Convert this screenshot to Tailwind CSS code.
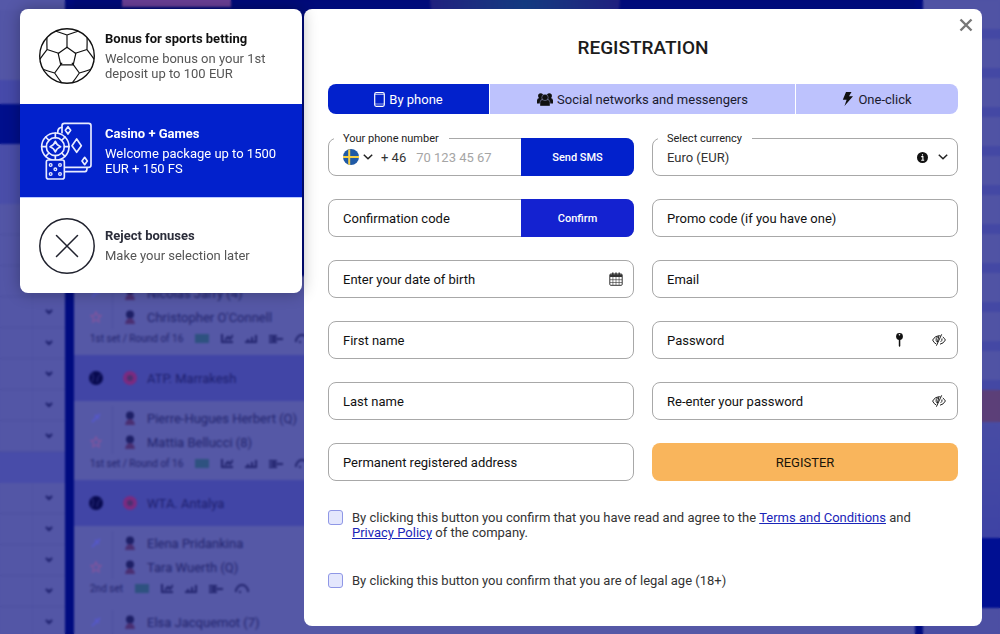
<!DOCTYPE html>
<html lang="en">
<head>
    <meta charset="UTF-8">
    <meta name="viewport" content="width=device-width, initial-scale=1.0">
    <title>Registration</title>
    <script src="https://cdn.jsdelivr.net/npm/@tailwindcss/browser@4"></script>
</head>
<body class="relative min-h-screen overflow-hidden bg-[#000b80] font-['Roboto',sans-serif] text-[13px] leading-[15px] text-[#222]">

    <!-- Sportsbook page behind the dialog -->
    <div class="absolute inset-0 flex overflow-hidden" aria-hidden="true">
        <!-- Sports menu -->
        <div class="w-[65px] shrink-0 bg-[#5356a6]">
            <div class="h-20 border-t-[10px] border-[#5558a8]"></div>
            <div class="h-6 bg-[#464aaa]"></div>
            <div class="h-10 bg-[#000f8c]"></div>
            <div class="h-[60px] bg-[#4a4ea9]"></div>
            <div id="sports-menu"></div>
        </div>

        <!-- Live matches -->
        <div class="ml-[9px] mr-2 flex min-w-0 flex-1 flex-col bg-[#4f52a0]">
            <div class="flex h-[276px] shrink-0 justify-between bg-[#000b7a]">
                <div class="ml-12 h-[7px] w-[109px] bg-[#6a3f96]"></div>
                <div class="mr-[295px] h-10 w-[190px] rounded-b-full bg-linear-to-r from-[#20207f] via-[#123a80] to-[#20207f]"></div>
            </div>
            <div id="matches"></div>
        </div>

        <!-- Bet slip -->
        <div class="w-[77px] shrink-0 bg-[#4c4fa3]">
            <div id="betslip"></div>
            <div class="h-8 bg-[#5c3f78]"></div>
            <div class="h-[116px] bg-linear-to-b from-[#484ca4] to-[#3e43a4]"></div>
            <div class="h-[70px] bg-[#000f92]"></div>
        </div>
    </div>
    <div class="absolute inset-0 backdrop-blur-[1px]"></div>

    <!-- Dialog -->
    <main class="relative flex items-start gap-[2px] pb-2 pl-5 pr-[18px] pt-[9px]">

        <!-- Bonus choice -->
        <aside class="z-10 w-[282px] shrink-0 overflow-hidden rounded-lg bg-white shadow-[0_0_16px_rgba(0,0,0,0.3)]">
            <button type="button" class="flex h-[95px] w-full items-center gap-[10px] px-[19px] pb-[2px] text-left">
                <svg class="size-14 shrink-0" viewBox="-28 -28 56 56" fill="none" stroke="#111" stroke-width="1.2" stroke-linejoin="round" stroke-linecap="round">
                    <circle r="27.3" stroke-width="1.4"/>
                    <path d="M0-8.8 8.8-2.4 6.2 8.8H-6.2L-8.8-2.4Z"/>
                    <g id="ball-seam"><path d="M0-8.8V-21M-11-24.7Q-6-23.2 0-21Q6-23.2 11-24.7"/></g>
                    <use href="#ball-seam" transform="rotate(72)"/>
                    <use href="#ball-seam" transform="rotate(144)"/>
                    <use href="#ball-seam" transform="rotate(216)"/>
                    <use href="#ball-seam" transform="rotate(288)"/>
                </svg>
                <span class="flex flex-col gap-[5px]">
                    <span class="font-bold text-[#111]">Bonus for sports betting</span>
                    <span class="text-[#555]">Welcome bonus on your 1st deposit up to 100 EUR</span>
                </span>
            </button>
            <button type="button" class="flex h-[94px] w-full items-center gap-[10px] border-b border-[#b9c9ff] bg-[#0221cc] px-[19px] text-left text-white">
                <svg class="h-[60px] w-14 shrink-0" viewBox="117 363 168 180" fill="none" stroke="#e8ebff" stroke-width="5" stroke-linejoin="round" stroke-linecap="round">
                    <path d="M186 398V377q0-7 7-7h73q7 0 7 7v118q0 7-7 7h-70"/>
                    <path d="M186 382q-13 0-13 16M197 515h58q6 0 6-11"/>
                    <path d="M204 380 212 391 204 402 196 391ZM230 417 244 437 230 457 216 437ZM254 472 262 483 254 494 246 483Z"/>
                    <circle cx="166" cy="440" r="41"/>
                    <circle cx="166" cy="440" r="27"/>
                    <path d="M166 424Q170 436 182 440Q170 444 166 456Q162 444 150 440Q162 436 166 424ZM166 399v14M166 467v14M125 440h14M193 440h14M137 411l10 10M195 411l-10 10M137 469l10-10M195 469l-10-10"/>
                    <rect x="139" y="480" width="54" height="57" rx="6" fill="#0221cc"/>
                    <g stroke-width="4">
                        <circle cx="152" cy="495" r="4"/><circle cx="180" cy="495" r="4"/><circle cx="166" cy="508" r="4"/><circle cx="152" cy="522" r="4"/><circle cx="180" cy="522" r="4"/>
                    </g>
                </svg>
                <span class="flex flex-col gap-[5px]">
                    <span class="font-bold">Casino + Games</span>
                    <span>Welcome package up to 1500 EUR + 150 FS</span>
                </span>
            </button>
            <button type="button" class="flex h-[95px] w-full items-center gap-[10px] px-[19px] text-left">
                <svg class="size-14 shrink-0" viewBox="0 0 56 56" fill="none" stroke="#20222e" stroke-width="1.5" stroke-linecap="round">
                    <circle cx="28" cy="28" r="27.2"/>
                    <path d="M17.500 17.500l21 21M38.500 17.500l-21 21"/>
                </svg>
                <span class="flex flex-col gap-[5px]">
                    <span class="font-bold text-[#2b2d3a]">Reject bonuses</span>
                    <span class="text-[#555]">Make your selection later</span>
                </span>
            </button>
        </aside>

        <!-- Registration form -->
        <section class="relative min-w-0 flex-1 rounded-lg bg-white px-6 pb-[38px] pt-7">
            <button type="button" aria-label="Close" class="absolute right-[9px] top-[9px]">
                <svg class="size-[14px]" viewBox="0 0 14 14" fill="none" stroke="#777" stroke-width="2.4"><path d="M1.500 1.500l11 11M12.500 1.500l-11 11"/></svg>
            </button>
            <h1 class="text-center text-[19px] leading-[22px] font-medium text-[#1c1c1c]">REGISTRATION</h1>

            <!-- Tabs -->
            <div role="tablist" class="mt-[25px] flex h-[30px] gap-px overflow-hidden rounded-lg text-[#1a1a2e]">
                <button type="button" role="tab" aria-selected="true" class="flex w-[161px] items-center justify-center gap-1 bg-[#0221cc] text-white">
                    <svg class="h-[15px] w-[11px]" viewBox="0 0 11 15" fill="none" stroke="currentColor"><rect x=".7" y=".7" width="9.600" height="13.600" rx="1.500" stroke-width="1.200"/><path d="M1 2.500h9M1 12h9" stroke-width=".6"/></svg>
                    By phone
                </button>
                <button type="button" role="tab" aria-selected="false" class="flex flex-1 items-center justify-center gap-1 bg-[#bdc2fd]">
                    <svg class="h-[13px] w-4" viewBox="0 0 16 13" fill="#111"><circle cx="3.700" cy="2.800" r="2.600"/><circle cx="12.300" cy="2.800" r="2.600"/><path d="M0 10.500V7.500Q0 5 2.200 5H5L4 10.500ZM16 10.500V7.500Q16 5 13.800 5H11L12 10.500Z"/><g stroke="#bdc2fd" stroke-width=".4"><path d="M3 13V9.500Q3 6.600 5.800 6.600H10.200Q13 6.600 13 9.500V13Z"/><circle cx="8" cy="4.400" r="3.200"/></g></svg>
                    Social networks and messengers
                </button>
                <button type="button" role="tab" aria-selected="false" class="flex w-[162px] items-center justify-center gap-[5px] bg-[#bdc2fd]">
                    <svg class="h-[14px] w-[11px]" viewBox="0 0 11 14" fill="#111"><path d="M4 0H9.500L7 4.300H11L2.500 14 4.600 7.700H.8Z"/></svg>
                    One-click
                </button>
            </div>

            <form id="reg-form" class="mt-6">
                <div class="grid grid-cols-2 gap-x-[18px] gap-y-[23px]">

                    <div class="relative flex h-[38px] items-center rounded-lg border border-[#a8a8a8] pl-[14px]">
                        <label for="phone" class="absolute -top-2 left-[5px] bg-white pl-[9px] pr-[10px] text-[11px] leading-[15px]">Your phone number</label>
                        <button type="button" aria-label="Country code" class="flex shrink-0 items-center gap-1">
                            <svg class="size-4" viewBox="0 0 16 16"><circle cx="8" cy="8" r="8" fill="#1f5aa6"/><path d="M5.200.6h2V16L5.200 15.400ZM0 7H16V9H0Z" fill="#f5cf45"/></svg>
                            <svg class="h-[6px] w-[10px]" viewBox="0 0 10 6" fill="none" stroke="#222" stroke-width="1.500"><path d="M.8.8 5 4.800 9.200.8"/></svg>
                            <span class="ml-1 text-[#333]">+ 46</span>
                        </button>
                        <input id="phone" type="tel" placeholder="70 123 45 67" class="ml-[10px] h-full w-0 flex-1 outline-none placeholder:text-[#a5a5a5]">
                        <button type="button" class="-my-px -mr-px h-[38px] w-[113px] shrink-0 rounded-r-lg bg-[#0221cc] text-[11px] font-medium text-white">Send SMS</button>
                    </div>

                    <div class="relative flex h-[38px] items-center rounded-lg border border-[#a8a8a8]">
                        <label for="currency" class="absolute -top-2 left-[5px] bg-white pl-[9px] pr-[10px] text-[11px] leading-[15px]">Select currency</label>
                        <select id="currency" class="h-full w-full appearance-none rounded-lg bg-transparent pl-[14px] pr-12 text-[#333] outline-none">
                            <option>Euro (EUR)</option>
                        </select>
                        <div class="pointer-events-none absolute right-[9px] flex items-center gap-[10px]">
                            <svg class="size-[11px]" viewBox="0 0 11 11"><circle cx="5.500" cy="5.500" r="5.500" fill="#111"/><path d="M4.200 4.600h1.700v3.600M4.200 8.300h3M5.500 2.200v1.200" stroke="#fff" stroke-width="1.100" fill="none"/></svg>
                            <svg class="h-[6px] w-[10px]" viewBox="0 0 10 6" fill="none" stroke="#222" stroke-width="1.500"><path d="M.8.8 5 4.800 9.200.8"/></svg>
                        </div>
                    </div>

                    <div class="flex h-[38px] items-center rounded-lg border border-[#a8a8a8] pl-[14px]">
                        <input type="text" aria-label="Confirmation code" placeholder="Confirmation code" class="h-full w-0 flex-1 outline-none placeholder:text-[#111]">
                        <button type="button" class="-my-px -mr-px h-[38px] w-[113px] shrink-0 rounded-r-lg bg-[#1422d0] text-[11px] font-medium text-white">Confirm</button>
                    </div>
                    <input type="text" aria-label="Promo code" placeholder="Promo code (if you have one)" class="h-[38px] w-full rounded-lg border border-[#a8a8a8] px-[14px] outline-none placeholder:text-[#111]">

                    <div class="flex h-[38px] items-center rounded-lg border border-[#a8a8a8] pl-[14px] pr-[10px]">
                        <input type="text" aria-label="Date of birth" placeholder="Enter your date of birth" class="h-full w-0 flex-1 outline-none placeholder:text-[#111]">
                        <button type="button" aria-label="Open calendar">
                            <svg class="size-[14px]" viewBox="0 0 14 14" fill="none" stroke="#333"><rect x=".8" y="2" width="12.400" height="11.300" rx="1" stroke-width="1"/><path d="M1 3.700h12" stroke-width="2.600"/><path d="M3.900 5v8M7 5v8M10.100 5v8M1 7.700h12M1 10.500h12" stroke-width=".6"/><path d="M3.800.4v3M7 .4v3M10.200.4v3" stroke-width="1.400"/></svg>
                        </button>
                    </div>
                    <input type="email" aria-label="Email" placeholder="Email" class="h-[38px] w-full rounded-lg border border-[#a8a8a8] px-[14px] outline-none placeholder:text-[#111]">

                    <input type="text" aria-label="First name" placeholder="First name" class="h-[38px] w-full rounded-lg border border-[#a8a8a8] px-[14px] outline-none placeholder:text-[#111]">
                    <div class="flex h-[38px] items-center gap-[29px] rounded-lg border border-[#a8a8a8] pl-[14px] pr-[11px]">
                        <input type="password" aria-label="Password" placeholder="Password" class="h-full w-0 flex-1 outline-none placeholder:text-[#111]">
                        <button type="button" aria-label="Generate password">
                            <svg class="h-[14px] w-[7px]" viewBox="0 0 7 14" fill="#111"><circle cx="3.500" cy="3.500" r="3.400"/><path d="M2.800 6h1.500v7L3.500 14l-.7-1Z"/><circle cx="3.500" cy="1.800" r=".8" fill="#fff"/></svg>
                        </button>
                        <button type="button" aria-label="Show password">
                            <svg class="h-3 w-[14px]" viewBox="0 0 14 12" fill="none" stroke="#222" stroke-width="1"><path id="eye-off" d="M4.200 10Q2 9 .6 6 3 1.700 7 1.700q.8 0 1.500.2M10.800 3Q12.500 4.200 13.400 6 11.500 9.600 8 10.200M9.700.3 4.400 11.700M5.300 8.200Q3.400 6.600 4.300 4.200 5 2.800 6.800 2.600L5.300 8.200M10 4.500Q10.300 6.800 8.700 7.800"/></svg>
                        </button>
                    </div>

                    <input type="text" aria-label="Last name" placeholder="Last name" class="h-[38px] w-full rounded-lg border border-[#a8a8a8] px-[14px] outline-none placeholder:text-[#111]">
                    <div class="flex h-[38px] items-center rounded-lg border border-[#a8a8a8] pl-[14px] pr-[11px]">
                        <input type="password" aria-label="Re-enter your password" placeholder="Re-enter your password" class="h-full w-0 flex-1 outline-none placeholder:text-[#111]">
                        <button type="button" aria-label="Show password">
                            <svg class="h-3 w-[14px]" viewBox="0 0 14 12" fill="none" stroke="#222" stroke-width="1"><use href="#eye-off"/></svg>
                        </button>
                    </div>

                    <input type="text" aria-label="Permanent registered address" placeholder="Permanent registered address" class="h-[38px] w-full rounded-lg border border-[#a8a8a8] px-[14px] outline-none placeholder:text-[#111]">
                    <button type="submit" class="h-[38px] rounded-lg bg-[#f9b55c] text-[#1a1408]">REGISTER</button>
                </div>

                <div class="mt-[29px] flex items-start gap-[9px] pr-6">
                    <input id="terms" type="checkbox" class="size-[15px] shrink-0 appearance-none rounded-[3px] border border-[#8f97e6] bg-[#e4e7fd] checked:bg-[#0221cc]">
                    <label for="terms" class="text-[#333]">By clicking this button you confirm that you have read and agree to the <a href="#" class="text-[#1a25b8] underline">Terms and Conditions</a> and <a href="#" class="text-[#1a25b8] underline">Privacy Policy</a> of the company.</label>
                </div>
                <div class="mt-[33px] flex items-start gap-[9px] pr-6">
                    <input id="age" type="checkbox" class="size-[15px] shrink-0 appearance-none rounded-[3px] border border-[#8f97e6] bg-[#e4e7fd] checked:bg-[#0221cc]">
                    <label for="age" class="text-[#333]">By clicking this button you confirm that you are of legal age (18+)</label>
                </div>
            </form>
        </section>
    </main>

<script>
    // Sports menu: the ninth row is the selected one
    const menu = document.getElementById("sports-menu");
    for (let i = 0; i < 14; i++) {
        menu.innerHTML += i === 8
            ? `<div class="h-[31px] bg-[#484ca9]"></div>`
            : `<div class="flex h-[31px] border-b border-[#4c4fa0]">
                <div class="w-[33px] border-r border-[#4f52a3]"></div>
                <div class="flex flex-1 items-center justify-center">
                    <svg class="h-[6px] w-2" viewBox="0 0 8 6" fill="none" stroke="#1c1f6c" stroke-width="2"><path d="M1 1l3 3 3-3"/></svg>
                </div>
            </div>`;
    }

    const slip = document.getElementById("betslip");
    for (let i = 0; i < 10; i++) {
        slip.innerHTML += `<div class="h-[39px] border-b-[10px] border-[#4448a4] bg-[#5053a4]"></div>`;
    }

    const matches = [
        { players: ["Nicolas Jarry (4)", "Christopher O'Connell"], status: "1st set / Round of 16" },
        { title: "ATP. Marrakesh" },
        { players: ["Pierre-Hugues Herbert (Q)", "Mattia Bellucci (8)"], status: "1st set / Round of 16" },
        { title: "WTA. Antalya" },
        { players: ["Elena Pridankina", "Tara Wuerth (Q)"], status: "2nd set" },
        { players: ["Elsa Jacquemot (7)", ""], status: "" },
    ];

    const pin = `<svg class="size-3" viewBox="0 0 12 12" fill="none" stroke="#5558c8" stroke-width="2"><path d="M2 10l8-8M5 3l4 4"/></svg>`;
    const star = `<svg class="size-3" viewBox="0 0 12 12" fill="none" stroke="#7d569f" stroke-width="1.500"><path d="M6 1l1.500 3.300 3.500.4-2.600 2.400.7 3.600L6 8.900l-3.100 1.800.7-3.600L1 4.700l3.500-.4Z"/></svg>`;

    function playerRow(name, icon) {
        return `<div class="flex h-6 items-center">
            ${icon}
            <div class="ml-[10px] h-full border-l border-[#4d50a0]"></div>
            <svg class="ml-[10px] size-[14px]" viewBox="0 0 14 14"><circle cx="7" cy="4.500" r="4" fill="#1d1f66"/><path d="M2 14q1-6 5-6t5 6Z" fill="#4a2f72"/></svg>
            <span class="ml-[10px]">${name}</span>
        </div>`;
    }

    document.getElementById("matches").innerHTML = matches.map(m => m.title
        ? `<div class="flex h-[46px] items-center bg-[#4145a6] pl-[15px] text-[#1d1f70]">
            <svg class="size-[14px]" viewBox="0 0 14 14" fill="none" stroke="#2c2f80"><circle cx="7" cy="7" r="7" fill="#080a50" stroke="none"/><path d="M3 2q3 4 0 9M12 3q-4 2-4 8"/></svg>
            <div class="ml-5 size-[14px] rounded-full border-4 border-[#7c2a80] bg-[#4a3070]"></div>
            <span class="ml-[10px]">${m.title}</span>
        </div>`
        : `<div class="h-[79px] whitespace-nowrap bg-[#5558a6] pl-4 pt-[5px] text-[#23256f]">
            ${playerRow(m.players[0], pin)}
            ${playerRow(m.players[1], star)}
            <div class="flex h-[19px] items-center gap-3 text-[10px]">
                <span>${m.status}</span>
                <div class="h-[9px] w-[14px] bg-[#2e5280]"></div>
                <svg class="h-[9px] w-3" viewBox="0 0 12 9" fill="none" stroke="#23256f" stroke-width="2"><path d="M1 0v8h11M4 6l3-3 2 2 3-4"/></svg>
                <svg class="h-[9px] w-3" viewBox="0 0 12 9" fill="none" stroke="#23256f" stroke-width="2"><path d="M0 8h11V1M3 8V5M7 8V3"/></svg>
                <svg class="h-[9px] w-[14px]" viewBox="0 0 14 9" fill="none" stroke="#23256f" stroke-width="2"><path d="M0 2h8M0 5h14M0 8h8M5 1v7"/></svg>
                <svg class="h-[9px] w-[14px]" viewBox="0 0 14 9" fill="none" stroke="#23256f" stroke-width="2"><path d="M1 8V6q2-5 6-5t6 5v2M4 8h2"/></svg>
            </div>
        </div>`).join("");

    document.getElementById("reg-form").addEventListener("submit", e => e.preventDefault());
</script>
</body>
</html>
